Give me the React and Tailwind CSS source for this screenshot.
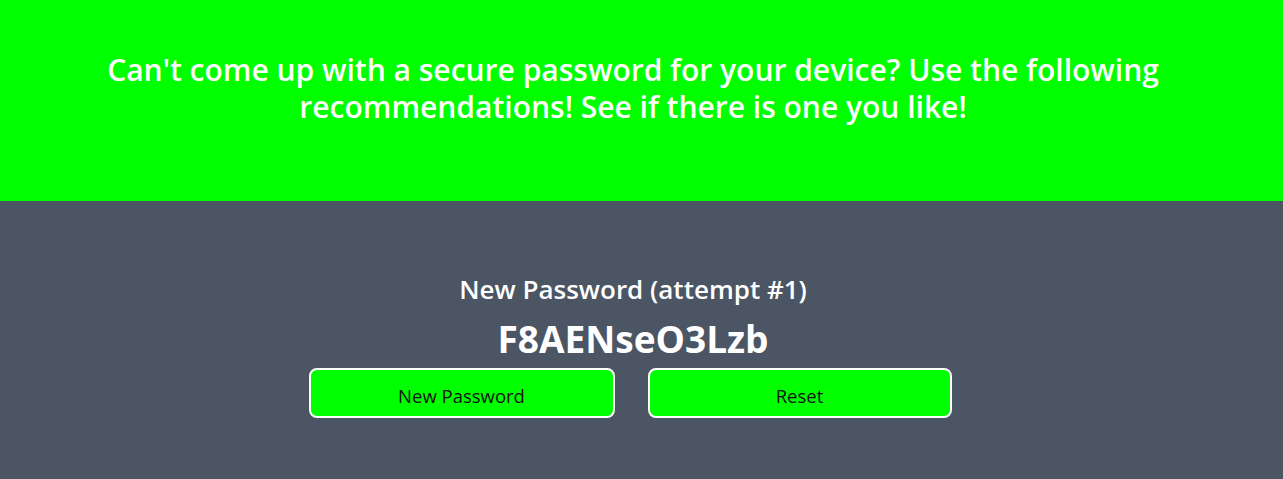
export default function App() {
  return (
    <div className="min-h-[479px] flex flex-col bg-[#4b5563]" style={{ fontFamily: '"Open Sans", "Noto Sans", sans-serif' }}>
      <header className="bg-[#00ff00] h-[201px]">
        <div className="w-[1266px] px-24 pt-[51px]">
          <h1 className="text-center text-white font-semibold text-[30px] leading-[37px]">
            Can't come up with a secure password for your device? Use the following recommendations! See if there is one you like!
          </h1>
        </div>
      </header>
      <main className="w-[1266px] flex flex-col items-center pt-[72px]">
        <h2 className="text-white font-semibold text-[26px] leading-[32px]">New Password (attempt #1)</h2>
        <p className="text-white font-bold text-[37px] leading-[48px] mt-[10px]">F8AENseO3Lzb</p>
        <div className="flex gap-[33px] mt-[5px] mr-[6px]">
          <button className="w-[306px] h-[50px] pt-[5px] bg-[#00ff00] border-2 border-white rounded-lg text-[18.5px] text-[#111]">New Password</button>
          <button className="w-[304px] h-[50px] pt-[5px] bg-[#00ff00] border-2 border-white rounded-lg text-[18.5px] text-[#111]">Reset</button>
        </div>
      </main>
    </div>
  );
}
